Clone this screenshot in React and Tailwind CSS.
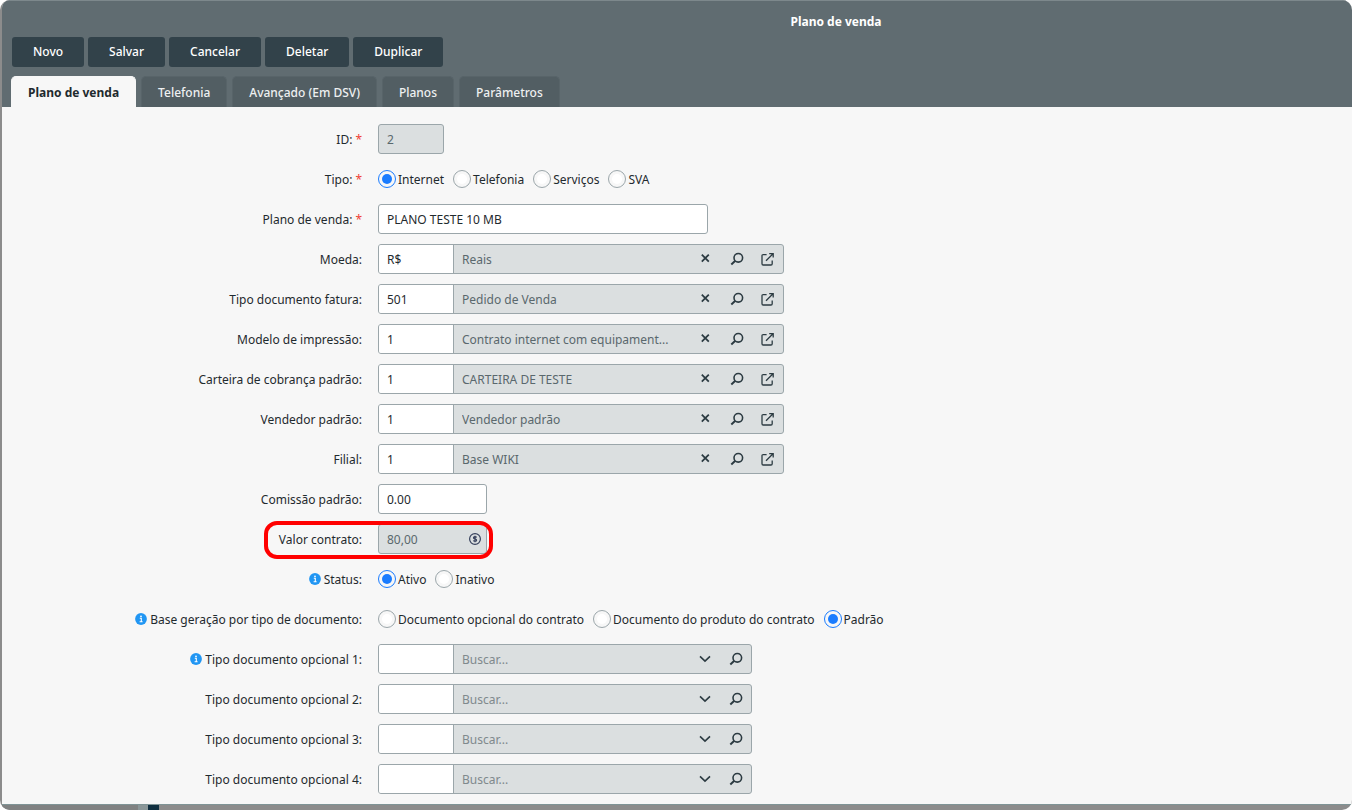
import { useId, useState } from 'react';
import clsx from 'clsx';

const ACTIONS = ['Novo', 'Salvar', 'Cancelar', 'Deletar', 'Duplicar'];
const TABS = ['Plano de venda', 'Telefonia', 'Avançado (Em DSV)', 'Planos', 'Parâmetros'];

const LOOKUPS = [
  { label: 'Moeda:', code: 'R$', text: 'Reais' },
  { label: 'Tipo documento fatura:', code: '501', text: 'Pedido de Venda' },
  { label: 'Modelo de impressão:', code: '1', text: 'Contrato internet com equipament...' },
  { label: 'Carteira de cobrança padrão:', code: '1', text: 'CARTEIRA DE TESTE' },
  { label: 'Vendedor padrão:', code: '1', text: 'Vendedor padrão' },
  { label: 'Filial:', code: '1', text: 'Base WIKI' },
];

const OPTIONAL_DOCS = [
  { label: 'Tipo documento opcional 1:', info: true },
  { label: 'Tipo documento opcional 2:' },
  { label: 'Tipo documento opcional 3:' },
  { label: 'Tipo documento opcional 4:' },
];

const BOX = 'h-[30px] rounded-[3px] border border-[#9ba6aa] px-2 outline-none focus:border-[#1a7cff]';

export default function App() {
  const [tab, setTab] = useState(TABS[0]);

  return (
    <div className="bg-white font-['Noto_Sans',sans-serif] text-[12px] leading-[17px] text-[#1f2a2e]">
      <div className="overflow-hidden rounded-[10px] bg-[#8c8c8c] pl-[2px]">
        <main className="overflow-hidden rounded-tl-lg border-b border-[#7f9496] bg-[#f7f7f7]">
          <header className="border-t border-[#7d888c] bg-[#606c71]">
            <h1 className="pt-3 pl-[318px] text-center font-bold text-white">Plano de venda</h1>
            <div className="flex gap-1 px-[10px] pt-[7px]">
              {ACTIONS.map((action) => (
                <button
                  key={action}
                  type="button"
                  className="h-[30px] rounded-[3px] bg-[#32424a] px-[21px] leading-4 font-medium text-white hover:bg-[#3d4f58]"
                >
                  {action}
                </button>
              ))}
            </div>
            <div role="tablist" className="flex gap-[5px] px-[9px] pt-[9px]">
              {TABS.map((name) => (
                <button
                  key={name}
                  type="button"
                  role="tab"
                  aria-selected={tab === name}
                  onClick={() => setTab(name)}
                  className={clsx(
                    'h-[31px] rounded-t-[5px] border border-b-0 px-4',
                    tab === name
                      ? 'border-[#f7f7f7] bg-[#f7f7f7] font-bold text-[#1f2a2e]'
                      : 'border-[#586469] bg-[#525e63] font-medium text-[#eef0f1]',
                  )}
                >
                  {name}
                </button>
              ))}
            </div>
          </header>

          <form className="grid gap-[10px] pt-[17px] pb-[10px]">
            <Row label="ID:" required>
              {(id) => <input id={id} readOnly defaultValue="2" className={clsx(BOX, 'w-[66px] bg-[#dbdfe0] text-[#5a686d]')} />}
            </Row>
            <RadioRow label="Tipo:" required name="tipo" options={['Internet', 'Telefonia', 'Serviços', 'SVA']} initial="Internet" />
            <Row label="Plano de venda:" required>
              {(id) => <input id={id} defaultValue="PLANO TESTE 10 MB" className={clsx(BOX, 'w-[330px] bg-white')} />}
            </Row>
            {LOOKUPS.map((item) => (
              <Row key={item.label} label={item.label}>
                {(id) => <Lookup id={id} {...item} />}
              </Row>
            ))}
            <Row label="Comissão padrão:">
              {(id) => <input id={id} defaultValue="0.00" className={clsx(BOX, 'w-[109px] bg-white')} />}
            </Row>
            <Row label="Valor contrato:" highlight>
              {(id) => (
                <div className={clsx(BOX, 'flex w-[109px] items-center bg-[#dbdfe0] pr-1')}>
                  <input id={id} readOnly defaultValue="80,00" className="h-full w-0 flex-1 text-[#5a686d] outline-none" />
                  <CoinIcon />
                </div>
              )}
            </Row>
            <RadioRow label="Status:" info name="status" options={['Ativo', 'Inativo']} initial="Ativo" />
            <RadioRow
              label="Base geração por tipo de documento:"
              info
              name="base"
              options={['Documento opcional do contrato', 'Documento do produto do contrato', 'Padrão']}
              initial="Padrão"
            />
            {OPTIONAL_DOCS.map((item) => (
              <Row key={item.label} label={item.label} info={item.info}>
                {(id) => <Search id={id} label={item.label} />}
              </Row>
            ))}
          </form>
        </main>
        <div className="flex h-[5px]">
          <span className="w-[136px] bg-[#808282]" />
          <span className="w-[10px] bg-[#8b9799]" />
          <span className="w-[11px] bg-[#102f40]" />
        </div>
      </div>
    </div>
  );
}

/** One form line: right-aligned label, then the field. */
function Row({ label, required, info, highlight, group, children }) {
  const id = useId();
  const Label = group ? 'span' : 'label';
  return (
    <div className="relative flex h-[30px] items-center gap-4">
      <div className="flex w-[360px] flex-none items-center justify-end gap-[3px]">
        {info && <InfoIcon />}
        <Label id={group ? id : undefined} htmlFor={group ? undefined : id}>
          {label}
        </Label>
        {required && <span className="text-[#f03e35]">*</span>}
      </div>
      {children(id)}
      {highlight && (
        <span className="pointer-events-none absolute -top-[3px] left-[262px] h-[38px] w-[229px] rounded-[13px] border-4 border-[#ff0000]" />
      )}
    </div>
  );
}

function RadioRow({ label, required, info, name, options, initial }) {
  const [value, setValue] = useState(initial);
  return (
    <Row label={label} required={required} info={info} group>
      {(id) => (
        <div role="radiogroup" aria-labelledby={id} className="flex items-center gap-[9px]">
          {options.map((opt) => (
            <label key={opt} className="flex items-center gap-[2px]">
              <input
                type="radio"
                name={name}
                checked={value === opt}
                onChange={() => setValue(opt)}
                className="h-[18px] w-[18px] flex-none appearance-none rounded-full border border-[#9ba6aa] bg-white bg-clip-content p-[3px] checked:border-[#1a7cff] checked:bg-[#1a7cff]"
              />
              {opt}
            </label>
          ))}
        </div>
      )}
    </Row>
  );
}

function Lookup({ id, code, text, label }) {
  return (
    <div className="flex h-[30px] w-[406px] overflow-hidden rounded-[3px] border border-[#9ba6aa] bg-[#dbdfe0]">
      <input id={id} defaultValue={code} className="w-[75px] flex-none border-r border-[#9ba6aa] bg-white px-2 outline-none" />
      <input readOnly aria-label={`${label} descrição`} defaultValue={text} className="w-0 flex-1 px-2 text-[#5a686d] outline-none" />
      <IconButton title="Limpar">
        <ClearIcon />
      </IconButton>
      <IconButton title="Pesquisar">
        <SearchIcon />
      </IconButton>
      <IconButton title="Abrir">
        <OpenIcon />
      </IconButton>
    </div>
  );
}

function Search({ id, label }) {
  return (
    <div className="flex h-[30px] w-[374px] overflow-hidden rounded-[3px] border border-[#9ba6aa] bg-[#dbdfe0]">
      <input id={id} className="w-[75px] flex-none border-r border-[#9ba6aa] bg-white px-2 outline-none" />
      <input
        aria-label={`${label} busca`}
        placeholder="Buscar..."
        className="w-0 flex-1 px-2 outline-none placeholder:text-[#7f898d]"
      />
      <IconButton title="Expandir">
        <ChevronIcon />
      </IconButton>
      <IconButton title="Pesquisar">
        <SearchIcon />
      </IconButton>
    </div>
  );
}

function IconButton({ title, children }) {
  return (
    <button type="button" aria-label={title} className="flex w-[31px] flex-none items-center justify-center text-[#2c3b42]">
      {children}
    </button>
  );
}

function ClearIcon() {
  return (
    <svg width="14" height="14" viewBox="0 0 14 14" fill="none" stroke="currentColor" strokeWidth="1.8" aria-hidden="true">
      <path d="M2.8 2.6l7 7M9.8 2.6l-7 7" />
    </svg>
  );
}

function SearchIcon() {
  return (
    <svg width="14" height="14" viewBox="0 0 14 14" fill="none" stroke="currentColor" strokeWidth="1.6" aria-hidden="true">
      <circle cx="8.3" cy="5.8" r="4.3" />
      <path d="M5.3 8.8L1.3 12.4" strokeWidth="2" />
    </svg>
  );
}

function OpenIcon() {
  return (
    <svg width="14" height="14" viewBox="0 0 14 14" fill="none" stroke="currentColor" strokeWidth="1.3" aria-hidden="true">
      <path d="M5.6 2.6H2.2Q1 2.6 1 3.8V11.8Q1 13 2.2 13H10Q11.2 13 11.2 11.8V8.4" />
      <path d="M8.2 1.6H12.2V5.6M12 1.8L5 8.8" />
    </svg>
  );
}

function ChevronIcon() {
  return (
    <svg width="14" height="14" viewBox="0 0 14 14" fill="none" stroke="currentColor" strokeWidth="1.6" aria-hidden="true">
      <path d="M2 4.4L7 9.2L12 4.4" />
    </svg>
  );
}

function CoinIcon() {
  return (
    <svg width="14" height="14" viewBox="0 0 14 14" fill="none" stroke="#36405c" strokeWidth="1.2" aria-hidden="true">
      <circle cx="7" cy="7" r="5.4" />
      <path d="M8.6 5.5Q8.2 4.7 7 4.7Q5.5 4.7 5.5 5.7Q5.5 6.7 7 6.9Q8.6 7.2 8.6 8.2Q8.6 9.3 7 9.3Q5.7 9.3 5.3 8.5M7 3.8V10.2" />
    </svg>
  );
}

function InfoIcon() {
  return (
    <svg width="12" height="12" viewBox="0 0 12 12" aria-hidden="true">
      <circle cx="6" cy="6" r="5.9" fill="#2196f3" />
      <circle cx="6" cy="3.3" r="0.9" fill="#fff" />
      <path d="M4.8 5.3H6.3V8.7M4.6 8.8H7.6" fill="none" stroke="#fff" strokeWidth="1.1" />
    </svg>
  );
}
